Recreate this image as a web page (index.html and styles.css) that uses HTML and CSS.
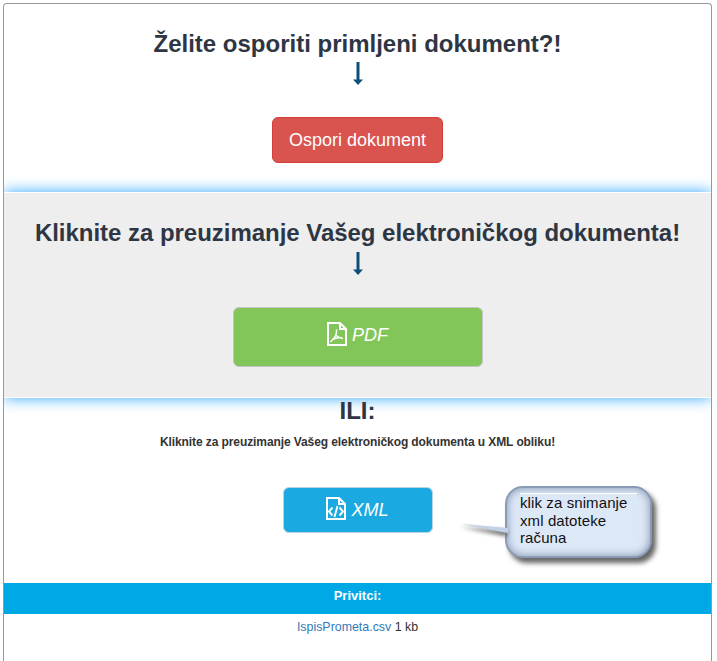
FILE: index.html
```html
<!DOCTYPE html>
<html>
<head>
  <meta charset="UTF-8">
  <title>Preuzimanje dokumenta</title>
  <link rel="stylesheet" href="styles.css">
</head>
<body>
  <div class="panel">
    <!-- Dispute -->
    <div class="dispute">
      <h2 class="title">Želite osporiti primljeni dokument?!</h2>
      <svg class="arrow" viewBox="0 0 12 23" width="12" height="23"><path d="M4.500 0h3v17.500H11L6 23 1 17.500h3.500z"/></svg>
      <a class="btn btn-red" href="#">Ospori dokument</a>
    </div>

    <!-- Download -->
    <div class="download">
      <h2 class="title">Kliknite za preuzimanje Vašeg elektroničkog dokumenta!</h2>
      <svg class="arrow" viewBox="0 0 12 23" width="12" height="23"><path d="M4.500 0h3v17.500H11L6 23 1 17.500h3.500z"/></svg>
      <a class="btn btn-green" href="#">
        <svg class="file-icon" viewBox="0 0 20 24" width="20" height="24">
          <path d="M1 1h12l6 6v16H1z M13 1v6h6"/>
          <path d="M9.500 7.500c.5 4-2 9-6 12.500M8.500 13c2 2 4.500 3.200 7.500 3.500M5.500 17.500c3-1.500 6-2 9-2" class="thin"/>
        </svg>
        <em>PDF</em>
      </a>
    </div>

    <!-- XML -->
    <div class="xml">
      <h2 class="title-ili">ILI:</h2>
      <p class="xml-note">Kliknite za preuzimanje Vašeg elektroničkog dokumenta u XML obliku!</p>
      <a class="btn btn-blue" href="#">
        <svg class="file-icon" viewBox="0 0 20 23" width="20" height="23">
          <path d="M1 1h12l6 6v15H1z M13 1v6h6"/>
          <path d="M6.500 10.500 3 14.500l3.500 4M13.500 10.500l3.500 4-3.500 4M11.500 9 8.500 20" class="bold"/>
        </svg>
        <em>XML</em>
      </a>
      <div class="callout">
        <svg class="callout-tail" viewBox="0 0 48 14" width="48" height="14"><path d="M0 2 47 6v5z"/></svg>
        <div class="callout-text">klik za snimanje xml datoteke računa</div>
      </div>
    </div>

    <!-- Attachments -->
    <div class="attach-head">Privitci:</div>
    <div class="attach-list"><a href="#">IspisPrometa.csv</a> 1 kb</div>
  </div>
</body>
</html>
```

FILE: styles.css
```css
html, body {
  height: 661px;
  overflow: hidden;
}
body {
  font-family: "Liberation Sans", Arial, sans-serif;
  background: #fff;
  margin: 0;
  padding: 3px 5px 0 3px;
  color: #333;
}
.panel {
  border: 1px solid #999;
  border-bottom: none;
  border-radius: 4px 4px 0 0;
  height: 658px;
  overflow: hidden;
  text-align: center;
}
.title {
  margin: 0;
  font-size: 24px;
  line-height: 30px;
  font-weight: bold;
  color: #2e3644;
}
.download .title {
  letter-spacing: -0.03px;
}
.arrow {
  display: block;
  margin: 3px auto 0;
  fill: #0d4f78;
}
.download .arrow {
  margin-top: 4px;
}
.btn {
  display: flex;
  align-items: center;
  justify-content: center;
  margin: 0 auto;
  border-radius: 6px;
  color: #fff;
  font-size: 18px;
  text-decoration: none;
  box-sizing: border-box;
}
.btn em {
  font-size: 18px;
  margin-left: 5px;
}
.btn-red {
  width: 171px;
  height: 46px;
  margin-top: 32px;
  background: #d9534f;
  border: 1px solid #d43f3a;
}
.btn-green {
  width: 250px;
  height: 60px;
  margin-top: 32px;
  padding-bottom: 4px;
  background: #82c65a;
  border: 1px solid #c4c4c4;
}
.btn-blue {
  width: 150px;
  height: 46px;
  margin-top: 37px;
  background: #1aa9e0;
  border: 1px solid #b5d4e4;
}
.file-icon {
  margin-top: -3px;
  fill: none;
  stroke: #fff;
  stroke-width: 2;
}
.file-icon .thin {
  stroke-width: 1.4;
}
.file-icon .bold {
  stroke-width: 1.9;
}
.dispute {
  padding-top: 25px;
  height: 163px;
}
.download {
  position: relative;
  height: 206px;
  padding-top: 25px;
  box-sizing: border-box;
  background: #eeeeee;
  border-top: 1px solid #fff;
  border-bottom: 1px solid #fff;
  box-shadow: 0 0 14px #33a8ff;
  clip-path: inset(-16px 0);
}
.xml {
  position: relative;
  height: 185px;
}
.title-ili {
  margin: 0;
  font-size: 24px;
  line-height: 26px;
  color: #2e3644;
}
.xml-note {
  margin: 10px 0 0;
  font-size: 12px;
  line-height: 16px;
  font-weight: bold;
  letter-spacing: -0.09px;
}
/* callout sits beside the XML button */
.callout {
  position: absolute;
  left: 501px;
  top: 88px;
  width: 147px;
  height: 72px;
  box-sizing: border-box;
  padding: 6px 13px;
  text-align: left;
  font-size: 15px;
  line-height: 17.500px;
  color: #111;
  background: #dce7f6;
  border: 2px solid #8a9bb5;
  border-radius: 18px;
  box-shadow: inset 0 0 9px #7f92ae, 4px 5px 5px #666;
}
.callout-text {
  position: relative;
  letter-spacing: 0.1px;
  border-top: 1px solid #fff;
  background: #dde8f7;
  margin-top: -1px;
}
.callout-tail {
  position: absolute;
  left: -46px;
  top: 34px;
  fill: #c3d1e6;
  filter: drop-shadow(-1px 3px 2px #555);
}
.attach-head {
  height: 31px;
  line-height: 25px;
  background: #00a8e6;
  color: #fff;
  font-size: 13px;
  font-weight: bold;
}
.attach-list {
  padding-top: 5px;
  font-size: 12.400px;
  line-height: 16px;
}
.attach-list a {
  color: #337ab7;
  text-decoration: none;
}
```
